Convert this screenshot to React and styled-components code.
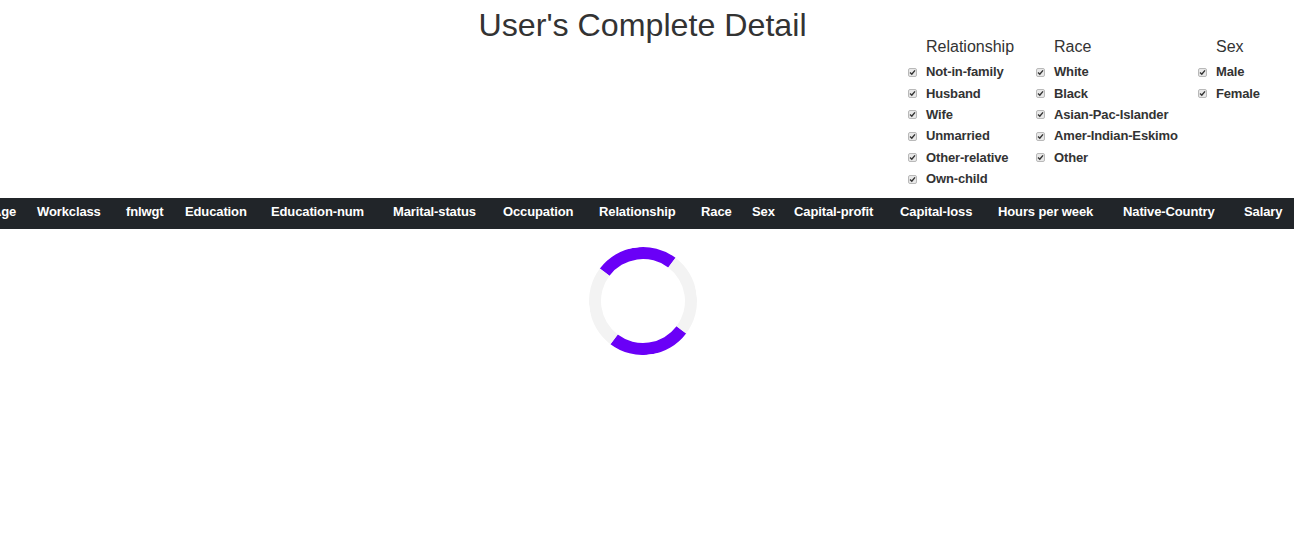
import React from 'react';
import styled, { createGlobalStyle } from 'styled-components';

const GlobalStyle = createGlobalStyle`
  body {
    margin: 0;
    background: #ffffff;
    font-family: "Liberation Sans", Arial, sans-serif;
    color: #333333;
  }
`;

const StyledPage = styled.div`
  width: 100%;
  overflow: hidden;
`;

const StyledHeader = styled.header`
  display: grid;
  grid-template-columns: 1fr auto 1fr;
  align-items: start;
  padding-top: 8px;
`;

const StyledTitle = styled.h1`
  grid-column: 2;
  margin: 0 9px 0 0;
  font-size: 32.2px;
  line-height: 35px;
  font-weight: 400;
  color: #333333;
  white-space: nowrap;
`;

const StyledFilters = styled.div`
  grid-column: 3;
  justify-self: end;
  display: flex;
  margin: 29px 25px 0 0;
`;

const StyledGroup = styled.div`
  width: ${props => props.width}px;
  display: flex;
  flex-direction: column;
`;

const StyledGroupTitle = styled.div`
  font-size: 16px;
  line-height: 20px;
  padding-left: 21px;
  margin-bottom: 4px;
  color: #333333;
`;

const StyledOption = styled.label`
  display: flex;
  align-items: center;
  height: 21.4px;
  font-size: 13px;
  font-weight: 700;
  letter-spacing: -0.15px;
  color: #333333;
  white-space: nowrap;
`;

const StyledBox = styled.span`
  box-sizing: border-box;
  width: 9px;
  height: 9px;
  margin: 1px 9px 0 3px;
  border: 1px solid #b9b9b9;
  border-radius: 2px;
  background: #e8e8e8;
  display: flex;
  align-items: center;
  justify-content: center;
`;

const StyledBar = styled.div`
  margin-top: 9px;
  background-color: #212529;
  height: 31px;
  overflow: hidden;
`;

const StyledBarRow = styled.div`
  display: flex;
  margin-left: -8px;
  padding: 4px 0 8px;
  white-space: nowrap;
`;

const StyledHeadCell = styled.div`
  flex: 0 0 ${props => props.width}px;
  font-size: 13px;
  line-height: 19px;
  font-weight: 700;
  letter-spacing: -0.12px;
  color: #ffffff;
`;

const StyledSpinner = styled.div`
  box-sizing: border-box;
  width: 108px;
  height: 108px;
  margin: 18px 0 0 calc(50% - 58px);
  border-radius: 50%;
  border: 12px solid #f3f3f3;
  border-top-color: #6a00f7;
  border-bottom-color: #6a00f7;
  transform: rotate(-8deg);
`;

const filters = [
  { title: 'Relationship', width: 128, options: ['Not-in-family', 'Husband', 'Wife', 'Unmarried', 'Other-relative', 'Own-child'] },
  { title: 'Race', width: 162, options: ['White', 'Black', 'Asian-Pac-Islander', 'Amer-Indian-Eskimo', 'Other'] },
  { title: 'Sex', width: 74, options: ['Male', 'Female'] },
];

const columns = [
  ['Age', 45], ['Workclass', 89], ['fnlwgt', 59], ['Education', 86],
  ['Education-num', 122], ['Marital-status', 110], ['Occupation', 96],
  ['Relationship', 102], ['Race', 51], ['Sex', 42], ['Capital-profit', 106],
  ['Capital-loss', 98], ['Hours per week', 125], ['Native-Country', 121], ['Salary', 60],
];

const CheckMark = () => (
  <svg width="7" height="7" viewBox="0 0 7 7">
    <path d="M1 3.6 L2.8 5.3 L6 1.4" fill="none" stroke="#333" strokeWidth="1.4" />
  </svg>
);

const App = () => (
  <StyledPage>
    <GlobalStyle />
    <StyledHeader>
      <StyledTitle>User's Complete Detail</StyledTitle>
      <StyledFilters>
        {filters.map(group => (
          <StyledGroup key={group.title} width={group.width}>
            <StyledGroupTitle>{group.title}</StyledGroupTitle>
            {group.options.map(option => (
              <StyledOption key={option}>
                <StyledBox><CheckMark /></StyledBox>
                {option}
              </StyledOption>
            ))}
          </StyledGroup>
        ))}
      </StyledFilters>
    </StyledHeader>
    <StyledBar>
      <StyledBarRow>
        {columns.map(([name, width]) => (
          <StyledHeadCell key={name} width={width}>{name}</StyledHeadCell>
        ))}
      </StyledBarRow>
    </StyledBar>
    <StyledSpinner />
  </StyledPage>
);

export default App;
